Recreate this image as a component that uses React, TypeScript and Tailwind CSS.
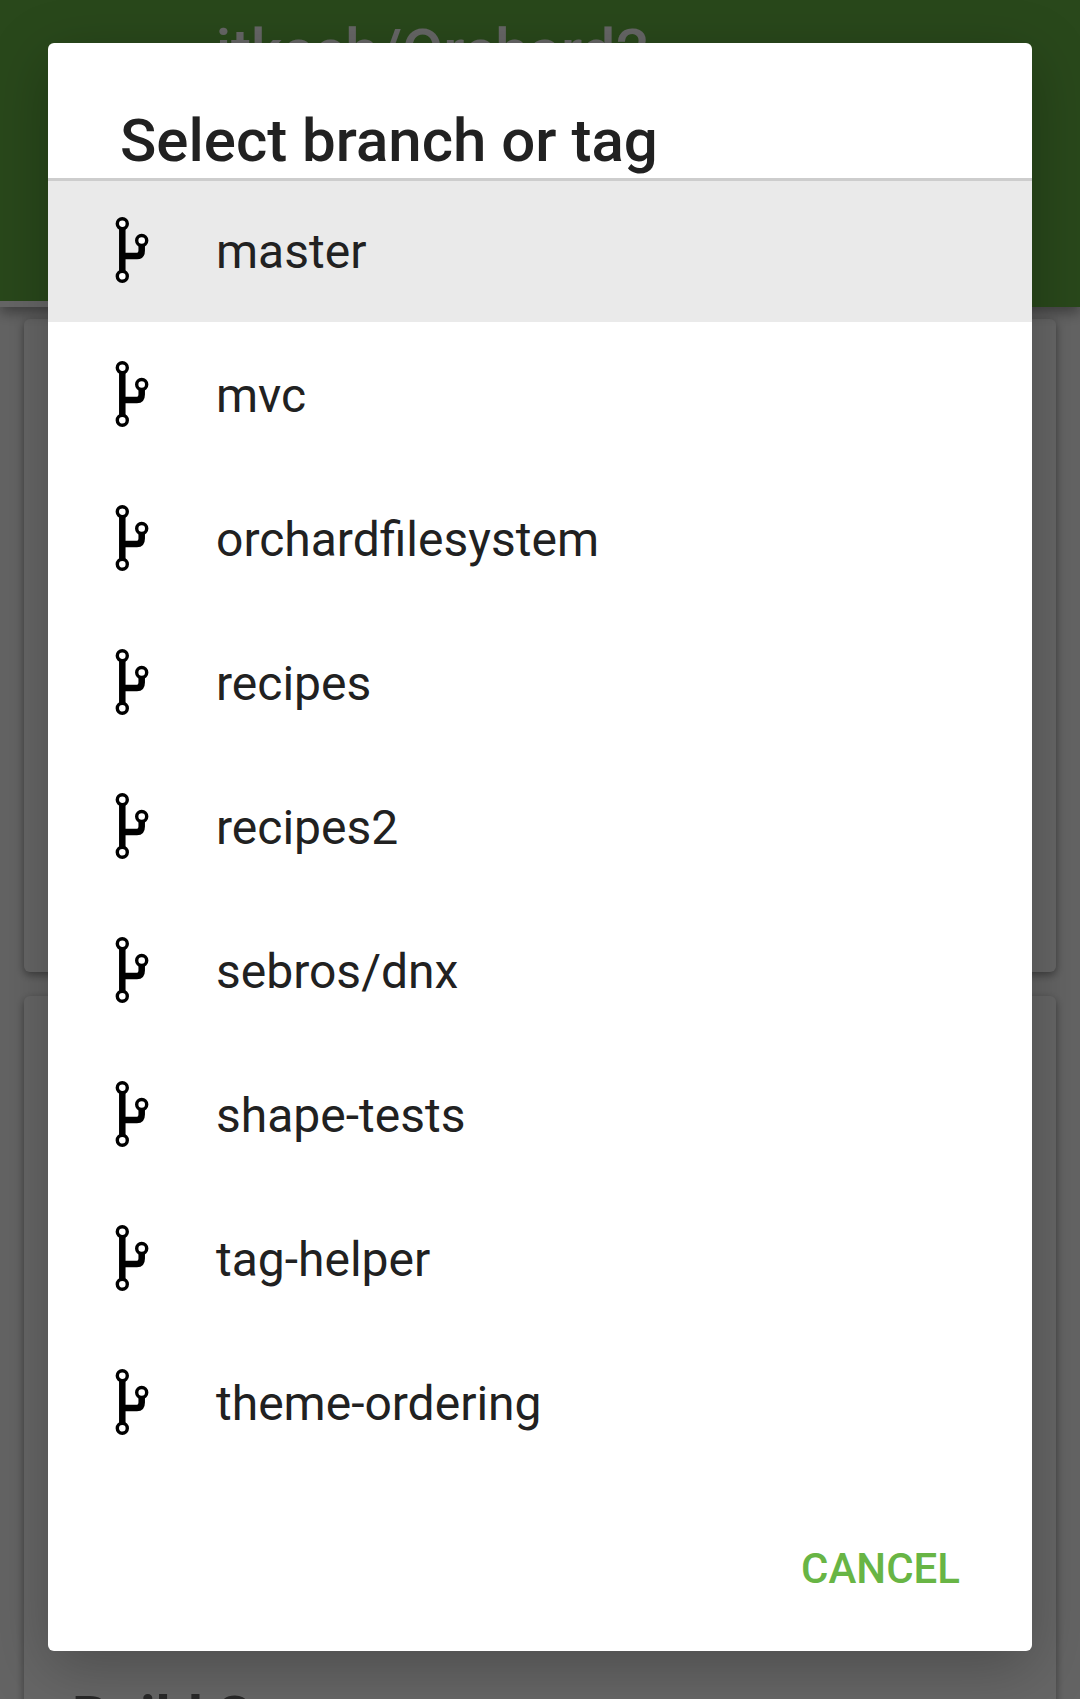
const branches = [
  "master",
  "mvc",
  "orchardfilesystem",
  "recipes",
  "recipes2",
  "sebros/dnx",
  "shape-tests",
  "tag-helper",
  "theme-ordering",
];

function BranchIcon() {
  return (
    <svg className="h-[66px] w-[34px] shrink-0" viewBox="0 0 34 66" fill="none" stroke="#000" aria-hidden="true">
      <path d="M7.300 11V55M7.300 39H22Q26.700 39 26.700 33.500V27" strokeWidth="6.500" />
      <circle cx="7.300" cy="6.700" r="5" strokeWidth="3.400" fill="#fff" />
      <circle cx="7.300" cy="59.300" r="5" strokeWidth="3.400" fill="#fff" />
      <circle cx="26.700" cy="23.500" r="5" strokeWidth="3.400" fill="#fff" />
    </svg>
  );
}

function RepositoryPage() {
  return (
    <div className="isolate flex h-full flex-col overflow-hidden bg-[#fafafa]" aria-hidden="true">
      <header className="z-10 flex h-[307px] shrink-0 flex-col justify-between bg-[#68b545] shadow-[0_6px_12px_rgba(0,0,0,0.35)]">
        <h1 className="mt-4 pl-[216px] text-[60px] leading-[70px] font-medium text-white">jtkech/Orchard2</h1>
        <div className="h-[6px] w-1/3 bg-white" />
      </header>
      <main className="flex grow flex-col gap-6 px-6 pt-3">
        <section className="h-[653px] shrink-0 rounded-md bg-white shadow-[0_3px_9px_rgba(0,0,0,0.4)]" />
        <section className="h-[1200px] shrink-0 rounded-md bg-white px-12 pt-[688px] shadow-[0_3px_9px_rgba(0,0,0,0.4)]">
          <h2 className="text-[57px] leading-[68px] font-bold text-[#666]">Build Status</h2>
        </section>
      </main>
    </div>
  );
}

export default function App() {
  return (
    <div className="relative h-screen overflow-hidden font-['Roboto',sans-serif]">
      <RepositoryPage />
      <div className="absolute inset-0 bg-black/60 px-12 pt-[43px]">
        <div
          role="dialog"
          aria-modal="true"
          aria-labelledby="dialog-title"
          className="flex flex-col rounded-md bg-white text-[#212121] shadow-[0_16px_60px_rgba(0,0,0,0.25)]"
        >
          <h2
            id="dialog-title"
            className="relative -mb-[3px] border-b-3 border-[#cdcdcd] px-[72px] pt-[63px] pb-[2px] text-[60px] leading-[70px] font-medium"
          >
            Select branch or tag
          </h2>
          <ul>
            {branches.map((name, i) => (
              <li key={name}>
                <button
                  type="button"
                  className={
                    "flex h-36 w-full items-center gap-[67px] pl-[67px] text-left text-[48px] leading-[56px] " +
                    (i === 0 ? "bg-[#eaeaea]" : "bg-white")
                  }
                >
                  <BranchIcon />
                  <span className="pt-1">{name}</span>
                </button>
              </li>
            ))}
          </ul>
          <div className="flex justify-end px-12 pt-[41px] pb-7">
            <button type="button" className="h-[108px] px-6 text-[42px] leading-[50px] font-medium text-[#68b545]">
              CANCEL
            </button>
          </div>
        </div>
      </div>
    </div>
  );
}
